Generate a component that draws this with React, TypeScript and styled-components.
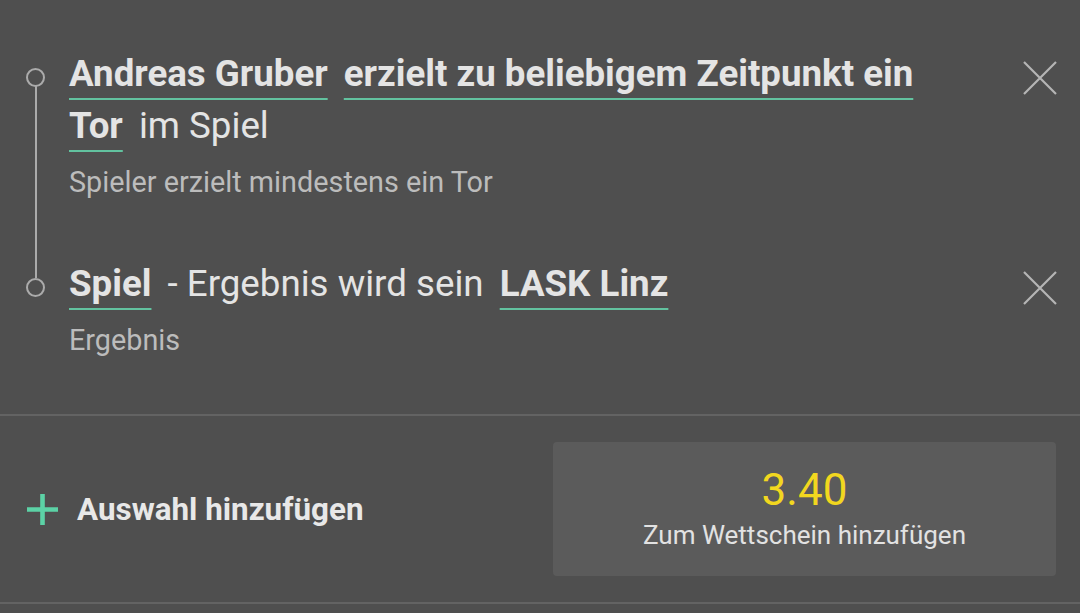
import React from "react";
import styled, { createGlobalStyle } from "styled-components";

const GlobalStyle = createGlobalStyle`
    html, body {
        margin: 0;
        padding: 0;
        background: #4f4f4f;
    }
    body {
        font-family: Roboto, "Noto Sans", "Liberation Sans", sans-serif;
        -webkit-font-smoothing: antialiased;
    }
`;

type Token = { text: string; strong?: boolean };

type Leg = {
    id: string;
    title: Token[];
    subtitle: string;
};

const legs: Leg[] = [
    {
        id: "scorer",
        title: [
            { text: "Andreas Gruber", strong: true },
            { text: "erzielt zu beliebigem Zeitpunkt ein Tor", strong: true },
            { text: "im Spiel" },
        ],
        subtitle: "Spieler erzielt mindestens ein Tor",
    },
    {
        id: "result",
        title: [
            { text: "Spiel", strong: true },
            { text: "- Ergebnis wird sein" },
            { text: "LASK Linz", strong: true },
        ],
        subtitle: "Ergebnis",
    },
];

/**
 * Bet Builder – ausgewählte Tipps
 */
const App = () => {
    return (
        <>
            <GlobalStyle />
            <Panel>
                <LegList>
                    {legs.map((leg, i) => (
                        <LegRow key={leg.id}>
                            <Marker $connected={i < legs.length - 1}>
                                <Dot />
                            </Marker>
                            <LegBody>
                                <LegTitle>
                                    {leg.title.map((t, j) => (
                                        <React.Fragment key={j}>
                                            <Token $strong={t.strong}>{t.text}</Token>
                                            {j < leg.title.length - 1 ? " " : null}
                                        </React.Fragment>
                                    ))}
                                </LegTitle>
                                <LegSubtitle>{leg.subtitle}</LegSubtitle>
                            </LegBody>
                            <RemoveButton aria-label="Entfernen">
                                <svg width="34" height="34" viewBox="0 0 34 34">
                                    <path d="M1 1 L33 33 M33 1 L1 33" stroke="#b5b5b5" strokeWidth="2.2" fill="none" />
                                </svg>
                            </RemoveButton>
                        </LegRow>
                    ))}
                </LegList>
                <Footer>
                    <AddSelection>
                        <svg width="31" height="31" viewBox="0 0 31 31">
                            <path d="M15.5 0 V31 M0 15.5 H31" stroke="#5cd2a6" strokeWidth="4.6" fill="none" />
                        </svg>
                        <span>Auswahl hinzufügen</span>
                    </AddSelection>
                    <AddToSlip>
                        <Odds>3.40</Odds>
                        <AddToSlipLabel>Zum Wettschein hinzufügen</AddToSlipLabel>
                    </AddToSlip>
                </Footer>
            </Panel>
        </>
    );
};

const Panel = styled.div`
    width: 1080px;
    height: 613px;
    overflow: hidden;
    background: #4f4f4f;
    display: flex;
    flex-direction: column;
`;

const LegList = styled.div`
    display: flex;
    flex-direction: column;
    gap: 58px;
    padding: 48px 0 56px;
    border-bottom: 2px solid #636363;
`;

const LegRow = styled.div`
    display: grid;
    grid-template-columns: 69px 1fr 120px;
    align-items: start;
`;

const Marker = styled.div<{ $connected?: boolean }>`
    position: relative;
    height: 58px;
    display: flex;
    align-items: center;
    padding-left: 26px;
    &::after {
        content: "";
        display: ${p => (p.$connected ? "block" : "none")};
        position: absolute;
        left: 35px;
        top: 38px;
        width: 2px;
        height: 192px;
        background: #ababab;
    }
`;

const Dot = styled.span`
    box-sizing: border-box;
    width: 19px;
    height: 19px;
    border: 2px solid #ababab;
    border-radius: 50%;
`;

const LegBody = styled.div`
    display: flex;
    flex-direction: column;
`;

const LegTitle = styled.div`
    font-size: 36.7px;
    line-height: 52px;
    color: #e4e4e4;
`;

const Token = styled.span<{ $strong?: boolean }>`
    margin-right: 7px;
    font-weight: ${p => (p.$strong ? 700 : 400)};
    text-decoration: ${p => (p.$strong ? "underline" : "none")};
    text-decoration-color: #62c29f;
    text-decoration-thickness: 2px;
    text-underline-offset: 12px;
    text-decoration-skip-ink: none;
    &:last-child {
        margin-right: 0;
    }
`;

const LegSubtitle = styled.div`
    margin-top: 12px;
    font-size: 28.8px;
    line-height: 36px;
    color: #bcbcbc;
`;

const RemoveButton = styled.button`
    justify-self: end;
    margin: 13px 23px 0 0;
    padding: 0;
    width: 34px;
    height: 34px;
    border: none;
    background: transparent;
    display: flex;
`;

const Footer = styled.div`
    display: flex;
    align-items: center;
    justify-content: space-between;
    padding: 26px 24px 26px 27px;
    border-bottom: 2px solid #636363;
`;

const AddSelection = styled.div`
    display: flex;
    align-items: center;
    gap: 19px;
    font-size: 31.4px;
    font-weight: 700;
    color: #e8e8e8;
`;

const AddToSlip = styled.div`
    width: 503px;
    height: 134px;
    border-radius: 4px;
    background: #5b5b5b;
    display: flex;
    flex-direction: column;
    align-items: center;
    justify-content: center;
`;

const Odds = styled.div`
    font-size: 44px;
    line-height: 52px;
    color: #f2d71f;
`;

const AddToSlipLabel = styled.div`
    font-size: 26px;
    line-height: 38px;
    color: #e2e2e2;
`;

export default App;
